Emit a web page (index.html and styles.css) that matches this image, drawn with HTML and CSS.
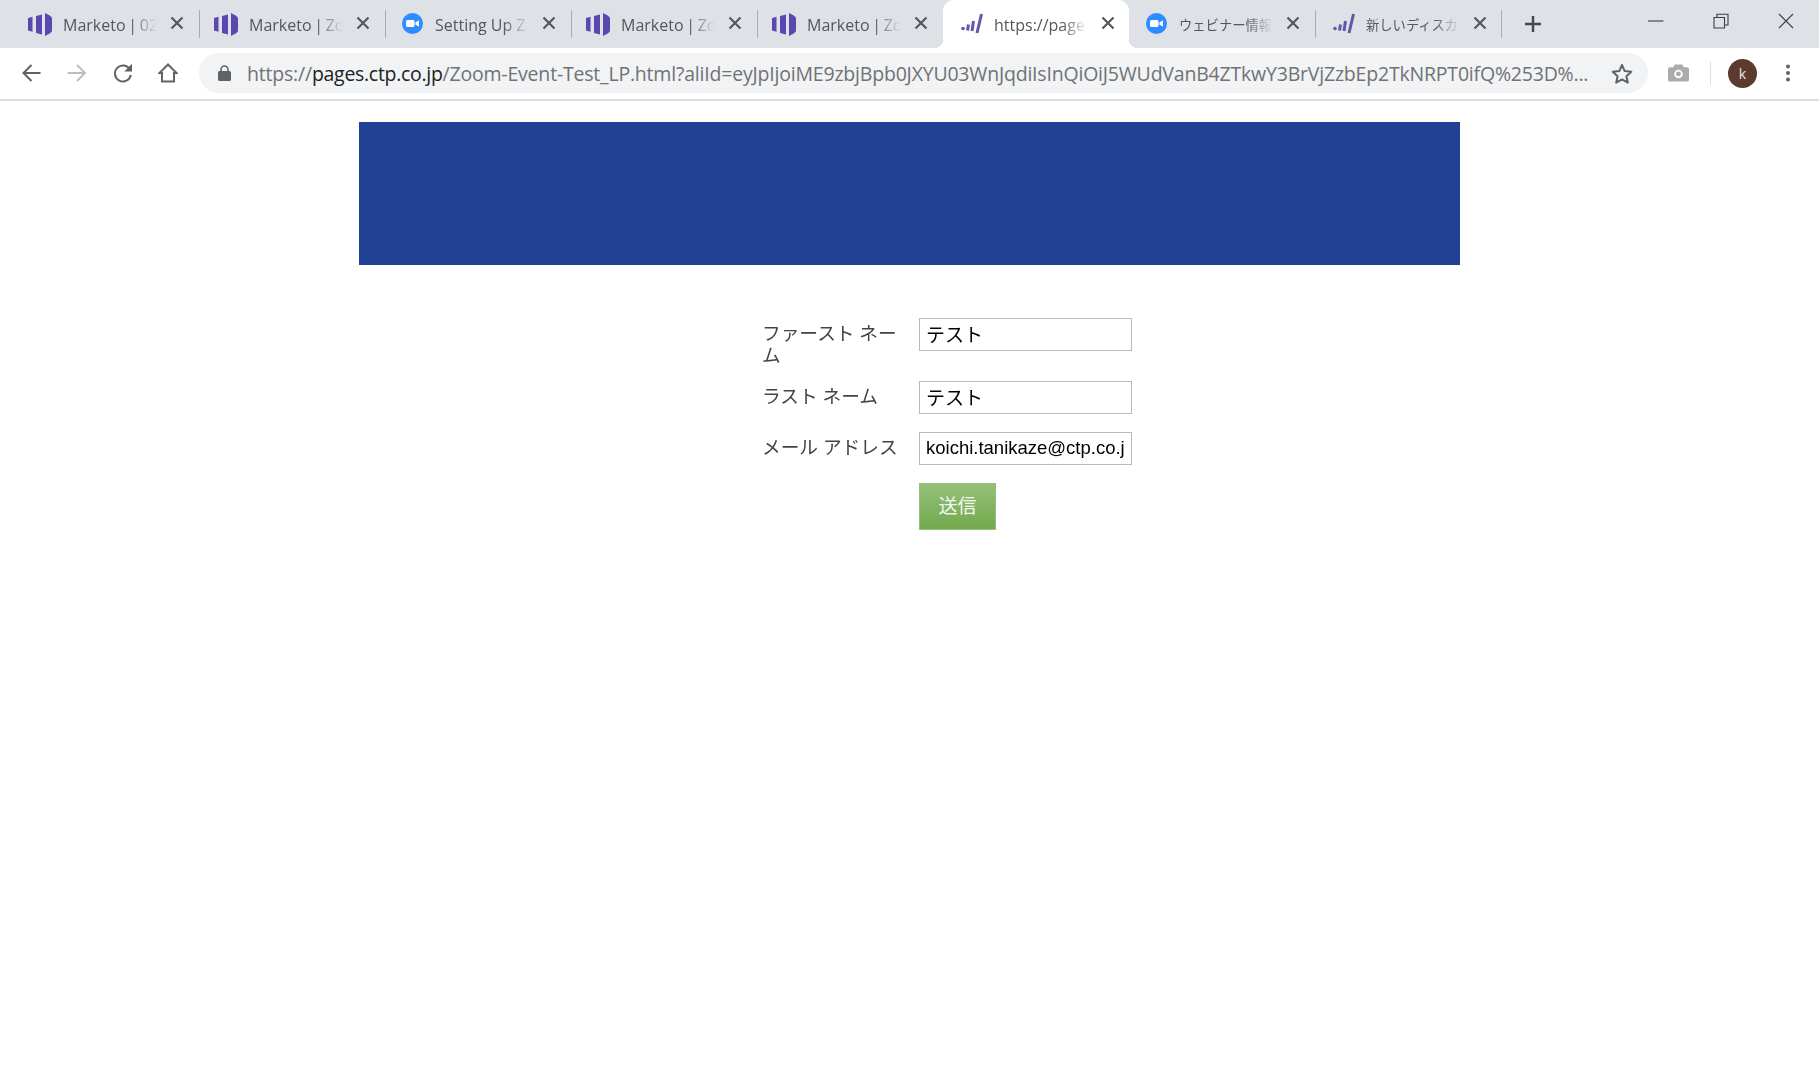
FILE: index.html
```html
<!DOCTYPE html>
<html lang="ja">
<head>
<meta charset="utf-8">
<title>Zoom Event Test LP</title>
<link rel="stylesheet" href="styles.css">
</head>
<body>
<svg class="defs" width="0" height="0" aria-hidden="true">
  <defs>
    <symbol id="marketo" viewBox="0 0 24 23">
      <path d="M0 5 4.500 3.800V18.800L0 17.500Z"/>
      <path d="M8 3 14 1.500V21.500L8 20Z"/>
      <path d="M17 0C21 2 24 3.500 24 5.500V17.500C24 19.500 21 21 17 23Z"/>
    </symbol>
    <symbol id="bars" viewBox="0 0 22 22">
      <circle cx="2" cy="15.500" r="1.800"/>
      <path d="M7.500 11.500 6.500 17.500M12.500 8 11 18M20.500 1 16 20" fill="none" stroke="currentColor" stroke-width="3"/>
    </symbol>
    <symbol id="zoomlogo" viewBox="0 0 21 21">
      <circle cx="10.500" cy="10.500" r="10.500" fill="#2d8cff"/>
      <rect x="4" y="7" width="8.500" height="7" rx="1.500" fill="#fff"/>
      <path d="M13.300 9.500 17 7.200V13.800L13.300 11.500Z" fill="#fff"/>
    </symbol>
    <symbol id="close" viewBox="0 0 14 14">
      <path d="M1.500 1.500 12.500 12.500M12.500 1.500 1.500 12.500" fill="none" stroke="currentColor" stroke-width="2.200"/>
    </symbol>
  </defs>
</svg>

<div class="browser">
  <div class="tabstrip">
    <div class="tab"><svg class="fav marketo"><use href="#marketo"/></svg><span class="title">Marketo | 02</span><svg class="x"><use href="#close"/></svg></div>
    <i class="sep"></i>
    <div class="tab"><svg class="fav marketo"><use href="#marketo"/></svg><span class="title">Marketo | Zo</span><svg class="x"><use href="#close"/></svg></div>
    <i class="sep"></i>
    <div class="tab"><svg class="fav zoomfav"><use href="#zoomlogo"/></svg><span class="title title-plain">Setting Up Z</span><svg class="x"><use href="#close"/></svg></div>
    <i class="sep"></i>
    <div class="tab"><svg class="fav marketo"><use href="#marketo"/></svg><span class="title">Marketo | Zo</span><svg class="x"><use href="#close"/></svg></div>
    <i class="sep"></i>
    <div class="tab"><svg class="fav marketo"><use href="#marketo"/></svg><span class="title">Marketo | Zo</span><svg class="x"><use href="#close"/></svg></div>
    <i class="sep hidden"></i>
    <div class="tab active"><svg class="fav barsfav"><use href="#bars"/></svg><span class="title">https://page</span><svg class="x"><use href="#close"/></svg></div>
    <i class="sep hidden"></i>
    <div class="tab"><svg class="fav zoomfav"><use href="#zoomlogo"/></svg><span class="title title-cjk">ウェビナー情報</span><svg class="x"><use href="#close"/></svg></div>
    <i class="sep"></i>
    <div class="tab"><svg class="fav barsfav"><use href="#bars"/></svg><span class="title title-cjk">新しいディスカ</span><svg class="x"><use href="#close"/></svg></div>
    <i class="sep"></i>
    <svg class="newtab" viewBox="0 0 18 18"><path d="M9 1V17M1 9H17" fill="none" stroke="#44474b" stroke-width="2.400"/></svg>
    <div class="winctl">
      <span class="wbtn"><svg viewBox="0 0 16 16"><path d="M0 8H15.500" fill="none" stroke="#3c3f43" stroke-width="1.100"/></svg></span>
      <span class="wbtn"><svg viewBox="0 0 16 16"><path d="M1 4.500H11.500V15H1ZM4 4.500V1.200H15V12H11.500" fill="none" stroke="#3c3f43" stroke-width="1.100"/></svg></span>
      <span class="wbtn"><svg viewBox="0 0 16 16"><path d="M1 1 15 15M15 1 1 15" fill="none" stroke="#3c3f43" stroke-width="1.100"/></svg></span>
    </div>
  </div>

  <div class="toolbar">
    <span class="tool"><svg viewBox="0 0 20 20"><path d="M18.500 10H1.500M9.500 2 1.500 10 9.500 18" fill="none" stroke="#5f6368" stroke-width="2"/></svg></span>
    <span class="tool"><svg viewBox="0 0 20 20"><path d="M.5 10H18M10 2 18 10 10 18" fill="none" stroke="#bdc0c3" stroke-width="2"/></svg></span>
    <span class="tool"><svg viewBox="0 0 20 20"><path d="M16.900 6.500A8 8 0 1 0 17.800 12" fill="none" stroke="#5f6368" stroke-width="2"/><path d="M19 .8V8.500H11.300Z" fill="#5f6368"/></svg></span>
    <span class="tool"><svg viewBox="0 0 20 20"><path d="M10 1.500 1.500 10H4V18.500H16V10H18.500Z" fill="none" stroke="#5f6368" stroke-width="2"/></svg></span>
    <div class="omnibox">
      <svg class="lock" viewBox="0 0 13 16"><path d="M3 7V4.500a3.500 3.500 0 0 1 7 0V7" fill="none" stroke="#5f6368" stroke-width="1.600"/><rect y="6" width="13" height="10" rx="1.500" fill="#5f6368"/></svg>
      <div class="url"><span class="host-pre">https://</span><span class="host">pages.ctp.co.jp</span><span class="path">/Zoom-Event-Test_LP.html?aliId=eyJpIjoiME9zbjBpb0JXYU03WnJqdiIsInQiOiJ5WUdVanB4ZTkwY3BrVjZzbEp2TkNRPT0ifQ%253D%...</span></div>
      <svg class="star" viewBox="0 0 22 21"><path d="M11 2 13.700 8.100 20.300 8.800 15.400 13.200 16.800 19.700 11 16.400 5.200 19.700 6.600 13.200 1.700 8.800 8.300 8.100Z" fill="none" stroke="#5f6368" stroke-width="2" stroke-linejoin="round"/></svg>
    </div>
    <div class="actions">
      <svg class="camera" viewBox="0 0 22 18"><path fill="#a9abad" fill-rule="evenodd" d="M7 0H15L16.500 3H20A2 2 0 0 1 22 5V16A2 2 0 0 1 20 18H2A2 2 0 0 1 0 16V5A2 2 0 0 1 2 3H5.500ZM11 5.500A4.500 4.500 0 1 0 11 14.500 4.500 4.500 0 0 0 11 5.500Z"/><circle cx="11" cy="10" r="2.500" fill="#a9abad"/></svg>
      <i class="action-sep"></i>
      <span class="avatar">k</span>
      <svg class="dots" viewBox="0 0 6 18"><circle cx="3" cy="2.500" r="2"/><circle cx="3" cy="9" r="2"/><circle cx="3" cy="15.500" r="2"/></svg>
    </div>
  </div>
</div>

<main class="page">
  <div class="banner"></div>
  <form class="form">
    <div class="row"><label class="label" for="fn">ファースト ネーム</label><input class="field field-jp" id="fn" type="text" value="テスト"></div>
    <div class="row"><label class="label" for="ln">ラスト ネーム</label><input class="field field-jp" id="ln" type="text" value="テスト"></div>
    <div class="row"><label class="label" for="em">メール アドレス</label><input class="field field-en" id="em" type="text" value="koichi.tanikaze@ctp.co.jp"></div>
    <div class="row"><span class="label"></span><button class="submit" type="button">送信</button></div>
  </form>
</main>
</body>
</html>
```
FILE: styles.css
```css
* { box-sizing: border-box; }
html, body { margin: 0; padding: 0; background: #fff; }
body {
  width: 1819px;
  height: 1080px;
  overflow: hidden;
  font-family: "Open Sans", "Noto Sans CJK JP", sans-serif;
}
.defs { position: absolute; }

/* tab strip */
.browser { filter: blur(0.35px); }
.tabstrip {
  display: flex;
  align-items: center;
  height: 48px;
  padding-left: 14px;
  background: #dee1e6;
}
.tab {
  display: flex;
  align-items: center;
  flex: 0 0 185px;
  height: 48px;
  padding-left: 14px;
  color: #54575b;
  position: relative;
}
.tab.active {
  flex-basis: 186px;
  margin-left: -1px;
  padding-left: 15px;
  background: #fff;
  border-radius: 11px 11px 0 0;
}
.tab.active::before,
.tab.active::after {
  content: "";
  position: absolute;
  bottom: 0;
  width: 9px;
  height: 9px;
}
.tab.active::before {
  left: -9px;
  background: radial-gradient(circle at 0 0, transparent 9px, #fff 9.500px);
}
.tab.active::after {
  right: -9px;
  background: radial-gradient(circle at 100% 0, transparent 9px, #fff 9.500px);
}
.fav { flex: 0 0 auto; display: block; }
.marketo { width: 24px; height: 23px; fill: #5b47b0; color: #5b47b0; }
.zoomfav { width: 21px; height: 21px; margin: 0 1px 1px 2px; }
.barsfav { width: 22px; height: 22px; margin: 0 0 0 3px; fill: #6257a8; color: #6257a8; }
.title {
  flex: 0 0 94px;
  margin-left: 11px;
  overflow: hidden;
  white-space: nowrap;
  font-size: 16px;
  word-spacing: -1.500px;
  line-height: 48px;
  padding-top: 1px;
  -webkit-mask-image: linear-gradient(to right, #000 68px, transparent 94px);
  mask-image: linear-gradient(to right, #000 68px, transparent 94px);
}
.title-plain { word-spacing: 0; }
.title-cjk { font-size: 13.300px; }
.x { flex: 0 0 14px; width: 14px; height: 14px; margin-left: 13px; margin-bottom: 2px; color: #55585c; }
.sep { flex: 0 0 1px; width: 1px; height: 28px; background: #a8abae; }
.sep.hidden { background: transparent; }
.newtab { width: 18px; height: 18px; margin-left: 22px; }
.winctl { display: flex; margin-left: auto; margin-right: 1px; align-self: flex-start; }
.wbtn {
  display: flex;
  align-items: center;
  justify-content: center;
  width: 65px;
  height: 41px;
}
.wbtn svg { width: 16px; height: 16px; display: block; }

/* toolbar */
.toolbar {
  display: flex;
  align-items: center;
  height: 53px;
  padding: 6px 0 7px 9px;
  background: #fff;
  border-bottom: 2px solid #dcdcdc;
}
.tool {
  display: flex;
  align-items: center;
  justify-content: center;
  flex: 0 0 45.500px;
}
.tool svg { width: 20px; height: 20px; display: block; }
.omnibox {
  display: flex;
  align-items: center;
  flex: 0 0 1449px;
  width: 1449px;
  min-width: 0;
  height: 40px;
  margin-left: 8px;
  padding: 0 15px 0 19px;
  background: #f1f3f4;
  border-radius: 20px;
}
.lock { width: 13px; height: 16px; flex: 0 0 auto; }
.url {
  flex: 1 1 auto;
  min-width: 0;
  margin-left: 16px;
  padding-top: 1px;
  white-space: nowrap;
  font-size: 19.500px;
  letter-spacing: -0.2px;
  color: #707275;
}
.url .host { color: #202124; letter-spacing: -0.3px; }
.star { width: 22px; height: 21px; flex: 0 0 auto; }
.actions { display: flex; align-items: center; flex: 1 1 auto; padding-left: 20px; }
.camera { width: 21px; height: 18px; display: block; }
.action-sep { width: 1px; height: 24px; margin-left: 21px; background: #dedfe0; }
.avatar {
  display: flex;
  align-items: center;
  justify-content: center;
  width: 29px;
  height: 29px;
  margin-left: 17px;
  border-radius: 50%;
  background: #5d3a2e;
  color: #f0e6e0;
  font-size: 14px;
}
.dots { width: 6px; height: 18px; margin-left: 28px; fill: #5f6368; display: block; }

/* page */
.page { width: 1101px; margin: 0 auto; padding-top: 21px; filter: blur(0.3px); }
.banner { height: 143px; background: #224194; }
.form { margin-top: 53px; padding-left: 403px; }
.row { display: flex; align-items: flex-start; margin-bottom: 13px; min-height: 38px; }
.label {
  flex: 0 0 157px;
  padding: 4px 20px 2px 0;
  font-size: 18.700px;
  line-height: 22px;
  color: #444;
}
.field {
  flex: 0 0 213px;
  width: 213px;
  height: 33px;
  padding: 0 6px;
  border: 1px solid #b9b9b9;
  border-radius: 0;
  background: #fff;
  color: #000;
  font-family: "Liberation Sans", "Noto Sans CJK JP", sans-serif;
  font-size: 18.500px;
}
.field-jp { font-size: 19px; padding-bottom: 2px; }
.field-en { padding-bottom: 1px; }
.submit {
  width: 77px;
  height: 47px;
  padding: 0 0 3px;
  border: 1px solid #93bf77;
  border-radius: 0;
  background: linear-gradient(to bottom, #95c07a, #72a94d);
  color: #f2f7ee;
  font-family: "Open Sans", "Noto Sans CJK JP", sans-serif;
  font-size: 19px;
}
```
